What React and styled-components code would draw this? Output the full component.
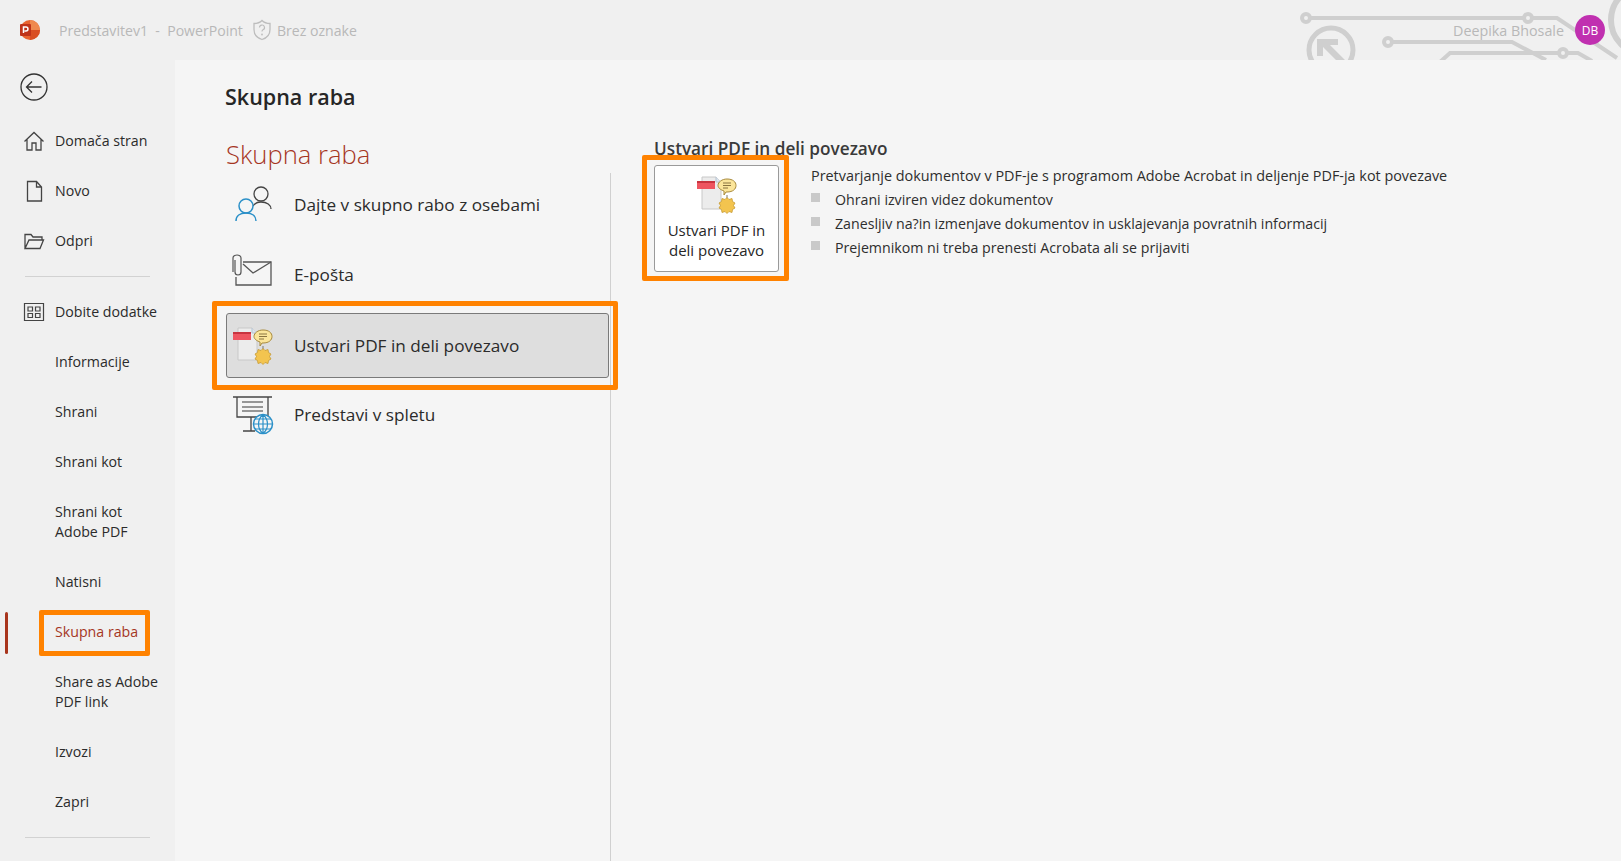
import React from 'react';
import styled, { createGlobalStyle } from 'styled-components';

const GlobalStyle = createGlobalStyle`
  html, body {
    margin: 0;
    padding: 0;
    height: 100%;
    overflow: hidden;
    background: #f0f0f0;
    font-family: "Open Sans", "Noto Sans", "Liberation Sans", sans-serif;
  }
  *, *::before, *::after { box-sizing: border-box; }
`;

const Orange = '#ff8200';

const Page = styled.div`
  width: 100%;
  height: 861px;
  display: flex;
  flex-direction: column;
  overflow: hidden;
  color: #262626;
`;

const TitleBar = styled.header`
  position: relative;
  flex: 0 0 60px;
  display: flex;
  align-items: center;
  padding: 0 16px 0 19px;
  font-size: 14.1px;
  color: #b8b8b8;
  overflow: hidden;
`;

const Logo = styled.svg`
  width: 22px;
  height: 22px;
  margin-right: 18px;
`;

const TitleText = styled.span`
  white-space: pre;
`;

const ShieldIcon = styled.svg`
  width: 20px;
  height: 22px;
  margin: 0 5px 0 9px;
`;

const Account = styled.div`
  position: relative;
  margin-left: auto;
  display: flex;
  align-items: center;
  gap: 11px;
  font-size: 14.3px;
`;

const Avatar = styled.div`
  width: 30px;
  height: 30px;
  border-radius: 50%;
  background: #c030b0;
  color: #fff;
  font-size: 12px;
  display: flex;
  align-items: center;
  justify-content: center;
`;

const Circuit = styled.svg`
  position: absolute;
  top: 0;
  right: 0;
  width: 371px;
  height: 60px;
`;

const Body = styled.div`
  flex: 1;
  display: flex;
  min-height: 0;
`;

const Sidebar = styled.nav`
  flex: 0 0 175px;
  padding-top: 12px;
  font-size: 14.2px;
`;

const BackButton = styled.svg`
  display: block;
  width: 30px;
  height: 30px;
  margin: 0 0 14px 19px;
`;

const NavItem = styled.div`
  position: relative;
  height: ${p => (p.$tall ? 70 : 50)}px;
  display: flex;
  align-items: center;
  padding-left: 55px;
  line-height: 20px;
  white-space: pre-line;
  color: ${p => (p.$active ? '#a5361f' : '#2b2b2b')};

  ${p => p.$active && `
    &::before {
      content: '';
      position: absolute;
      left: 5px;
      top: 5px;
      bottom: 3px;
      width: 3px;
      border-radius: 2px;
      background: #a8351d;
    }
    &::after {
      content: '';
      position: absolute;
      left: 39px;
      top: 3px;
      width: 111px;
      height: 46px;
      border: 5px solid ${Orange};
      border-radius: 2px;
    }
  `}
`;

const NavIcon = styled.svg`
  position: absolute;
  left: 22px;
  top: 50%;
  width: 24px;
  height: 24px;
  margin-top: -12px;
`;

const NavDivider = styled.hr`
  margin: 10px 25px 10px 25px;
  width: 125px;
  border: 0;
  border-top: 1px solid #d2d2d2;
`;

const Main = styled.main`
  flex: 1;
  min-width: 0;
  background: #f5f5f5;
  padding: 20px 0 0 50px;
  display: flex;
  flex-direction: column;
`;

const PageTitle = styled.h1`
  margin: 0;
  font-size: 21.5px;
  line-height: 34px;
  font-weight: 600;
  color: #262626;
`;

const Columns = styled.div`
  flex: 1;
  display: flex;
  min-height: 0;
  margin-top: 21px;
`;

const LeftColumn = styled.section`
  flex: 0 0 386px;
  display: flex;
  flex-direction: column;
`;

const SectionTitle = styled.h2`
  margin: 0;
  padding-left: 1px;
  font-size: 25.6px;
  line-height: 40px;
  font-weight: 300;
  color: #a5361f;
`;

const ShareList = styled.div`
  flex: 1;
  border-right: 1px solid #d0d0d0;
  margin-top: -2px;
`;

const ShareRow = styled.div`
  position: relative;
  height: ${p => (p.$selected ? 65 : 70)}px;
  margin: ${p => (p.$selected ? '4px 1px 1px 1px' : '0')};
  display: flex;
  align-items: center;
  gap: 20px;
  padding-left: 7px;
  font-size: 17.2px;
  color: #2b2b2b;
  &:first-child {
    margin-top: -4px;
  }
  ${p => p.$selected && `
    background: #dedede;
    border: 1px solid #7a7a7a;
    border-radius: 3px;
    padding-left: 5px;
    &::after {
      content: '';
      position: absolute;
      inset: -13px -10px -13px -15px;
      border: 5px solid ${Orange};
      border-radius: 2px;
    }
  `}
`;

const ShareIcon = styled.svg`
  flex: 0 0 42px;
  width: 42px;
  height: 42px;
`;

const RightColumn = styled.section`
  flex: 1;
  padding: 3px 0 0 43px;
`;

const RightTitle = styled.h3`
  margin: 0;
  font-size: 17.2px;
  line-height: 22px;
  font-weight: 600;
  color: #3a3a3a;
`;

const ActionRow = styled.div`
  display: flex;
  margin-top: 5px;
  gap: 32px;
`;

const ActionButton = styled.div`
  position: relative;
  flex: 0 0 125px;
  height: 107px;
  background: #fff;
  border: 1px solid #9a9a9a;
  border-radius: 3px;
  display: flex;
  flex-direction: column;
  align-items: center;
  padding-top: 8px;
  font-size: 15px;
  line-height: 20px;
  text-align: center;
  color: #262626;
  &::after {
    content: '';
    position: absolute;
    inset: -11px -11px -10px -13px;
    border: 5px solid ${Orange};
    border-radius: 2px;
  }
`;

const ActionIcon = styled.svg`
  width: 42px;
  height: 42px;
  margin-bottom: 4px;
`;

const Description = styled.div`
  margin-top: -1px;
  font-size: 14.4px;
  line-height: 24px;
  color: #2e2e2e;
`;

const BulletList = styled.ul`
  list-style: none;
  margin: 0;
  padding: 0;
  font-size: 14.2px;
`;

const Bullet = styled.li`
  position: relative;
  padding-left: 24px;
  &::before {
    content: '';
    position: absolute;
    left: 0;
    top: 5px;
    width: 9px;
    height: 9px;
    background: #c9c9c9;
  }
`;

const PdfLinkGlyph = ({ as: Svg }) => (
  <Svg viewBox="0 0 42 42">
    <path d="M6 3h14l5 5v27H6z" fill="#ececec" stroke="#c8c8c8" />
    <path d="M20 3v5h5" fill="#dbe4ee" stroke="#b6c4d2" />
    <rect x="1" y="7" width="18" height="8" fill="#ee5560" />
    <rect x="1" y="7" width="18" height="2" fill="#c8343f" />
    <path d="M31 5c6 0 9 3 9 6.500s-3 6.500-9 6.500h-1l-2 3v-4c-3-1-6-3-6-5.500C22 8 26 5 31 5z" fill="#fbe59a" stroke="#a88a3c" />
    <path d="M27 9h8M27 11.500h8M27 14h5" stroke="#8a7440" strokeWidth="1" />
    <path d="M31 21v4" stroke="#777" />
    <path transform="translate(0 -1.500)" d="M31 25l2 2 3-1 .5 3 2.500 1.500-1.500 2.500 1.500 2.500-2.500 1.500-.5 3-3-1-2 2-2-2-3 1-.5-3-2.500-1.500 1.500-2.500-1.500-2.500 2.500-1.500.5-3 3 1z" fill="#f3c44f" stroke="#c79a34" strokeWidth=".8" />
  </Svg>
);

const nav = [
  { label: 'Domača stran', icon: 'home' },
  { label: 'Novo', icon: 'new' },
  { label: 'Odpri', icon: 'open' },
  { divider: true },
  { label: 'Dobite dodatke', icon: 'addins' },
  { label: 'Informacije' },
  { label: 'Shrani' },
  { label: 'Shrani kot' },
  { label: 'Shrani kot\nAdobe PDF', tall: true },
  { label: 'Natisni' },
  { label: 'Skupna raba', active: true },
  { label: 'Share as Adobe\nPDF link', tall: true },
  { label: 'Izvozi' },
  { label: 'Zapri' },
  { divider: true },
];

const navIcons = {
  home: <path d="M2.500 12.500L12 3.500l9.500 9M5 10.500V21h5v-7h4v7h5V10.500" fill="none" stroke="#444" strokeWidth="1.300" />,
  new: <path d="M5.500 2.500h9l5 5.500v14h-14zM14.500 2.500V8h5" fill="none" stroke="#444" strokeWidth="1.300" />,
  open: <path d="M3 19.500V5.500h6l2 2.500h9v3M3 19.500h15l3.500-8.500H7z" fill="none" stroke="#444" strokeWidth="1.300" />,
  addins: <path d="M2.500 3.500h19v17h-19zM6 7h4.500v4H6zM13.500 7H18v4h-4.500zM6 13.500h4.500v4H6zM13.500 13.500H18v4h-4.500z" fill="none" stroke="#444" strokeWidth="1.200" />,
};

const PeopleGlyph = () => (
  <ShareIcon viewBox="0 0 42 42">
    <circle cx="29" cy="11" r="7" fill="none" stroke="#444" strokeWidth="1.300" />
    <path d="M21 23c2-3 5-4 8-4 6 0 10 3 10 7" fill="none" stroke="#444" strokeWidth="1.300" />
    <circle cx="14" cy="23" r="7" fill="#f5f5f5" stroke="#2b90c8" strokeWidth="1.500" />
    <path d="M4 38c0-5 4-8 10-8s10 3 10 8" fill="none" stroke="#2b90c8" strokeWidth="1.500" />
  </ShareIcon>
);

const MailGlyph = () => (
  <ShareIcon viewBox="0 0 42 42">
    <path d="M11 9h28v23H4V24" fill="none" stroke="#555" strokeWidth="1.300" />
    <path d="M11 11l10 9 18-11" fill="none" stroke="#555" strokeWidth="1.300" />
    <path d="M3 6v12c0 4 6 4 6 0V4C9 0 1 0 1 4v14" fill="none" stroke="#555" strokeWidth="1.200" transform="translate(0 1)" />
  </ShareIcon>
);

const PresentGlyph = () => (
  <ShareIcon viewBox="0 0 42 42">
    <path d="M1 4h39" stroke="#444" strokeWidth="1.300" />
    <path d="M5 4v20h31V4" fill="none" stroke="#444" strokeWidth="1.300" />
    <path d="M10 9h21M10 14h21M10 18h21" stroke="#777" strokeWidth="1.300" />
    <path d="M19 24v14M11 38h12" stroke="#444" strokeWidth="1.300" />
    <circle cx="31" cy="31" r="9.500" fill="#f5f5f5" stroke="#2b90c8" strokeWidth="1.500" />
    <path d="M21.500 31h19M31 21.500c-6 5-6 14 0 19M31 21.500c6 5 6 14 0 19M31 21.500v19M23 26h16M23 36h16" fill="none" stroke="#2b90c8" strokeWidth="1.200" />
  </ShareIcon>
);

const App = () => (
  <Page>
    <GlobalStyle />
    <TitleBar>
      <Logo viewBox="0 0 22 22">
        <circle cx="11" cy="11" r="10" fill="#e8632f" />
        <path d="M11 1a10 10 0 0 1 10 10H11z" fill="#ef8a4e" />
        <path d="M11 21a10 10 0 0 0 10-10H11z" fill="#d94f24" />
        <rect x="1" y="5" width="11" height="12" rx="1" fill="#bf3319" />
        <path d="M4.500 14V8h2.500a1.900 1.900 0 0 1 0 3.900H5.500" fill="none" stroke="#fff" strokeWidth="1.500" />
      </Logo>
      <TitleText>Predstavitev1  -  PowerPoint</TitleText>
      <ShieldIcon viewBox="0 0 20 22">
        <path d="M10 1.500c2 2 5 3 8 3v6c0 5-3 8.500-8 10-5-1.500-8-5-8-10v-6c3 0 6-1 8-3z" fill="none" stroke="#bdbdbd" strokeWidth="1.300" />
        <path d="M7.500 8.500a2.500 2.500 0 1 1 3.500 2.300c-.7.400-1 .9-1 1.700" fill="none" stroke="#bdbdbd" strokeWidth="1.200" />
        <circle cx="10" cy="15.500" r=".9" fill="#bdbdbd" />
      </ShieldIcon>
      <TitleText>Brez oznake</TitleText>
      <Circuit viewBox="0 0 371 60">
        <g fill="none" stroke="#cfcfcf" strokeWidth="4">
          <circle cx="56" cy="18" r="4" />
          <path d="M60 18h214M282 18h25l60 40" />
          <circle cx="278" cy="18" r="4" />
          <circle cx="138" cy="42" r="4" />
          <path d="M142 42h120l34 18" />
          <path d="M190 62l10-9h110" />
          <circle cx="313" cy="53" r="4" />
          <path d="M318 53h10l14 8" />
          <circle cx="81" cy="50" r="22" strokeWidth="5" />
          <circle cx="395" cy="20" r="34" strokeWidth="6" />
        </g>
        <path d="M69 39h19v6h-8l15 15h-9L73 47v9h-6V39z" fill="#cfcfcf" />
      </Circuit>
      <Account>
        <span>Deepika Bhosale</span>
        <Avatar>DB</Avatar>
      </Account>
    </TitleBar>
    <Body>
      <Sidebar>
        <BackButton viewBox="0 0 30 30">
          <circle cx="15" cy="15" r="13" fill="none" stroke="#333" strokeWidth="1.300" />
          <path d="M7.500 15h15M13 9.500L7.500 15l5.500 5.500" fill="none" stroke="#333" strokeWidth="1.300" />
        </BackButton>
        {nav.map((item, i) =>
          item.divider ? (
            <NavDivider key={i} />
          ) : (
            <NavItem key={i} $tall={item.tall} $active={item.active}>
              {item.icon && <NavIcon viewBox="0 0 24 24">{navIcons[item.icon]}</NavIcon>}
              {item.label}
            </NavItem>
          )
        )}
      </Sidebar>
      <Main>
        <PageTitle>Skupna raba</PageTitle>
        <Columns>
          <LeftColumn>
            <SectionTitle>Skupna raba</SectionTitle>
            <ShareList>
              <ShareRow><PeopleGlyph />Dajte v skupno rabo z osebami</ShareRow>
              <ShareRow><MailGlyph />E-pošta</ShareRow>
              <ShareRow $selected><PdfLinkGlyph as={ShareIcon} />Ustvari PDF in deli povezavo</ShareRow>
              <ShareRow><PresentGlyph />Predstavi v spletu</ShareRow>
            </ShareList>
          </LeftColumn>
          <RightColumn>
            <RightTitle>Ustvari PDF in deli povezavo</RightTitle>
            <ActionRow>
              <ActionButton>
                <PdfLinkGlyph as={ActionIcon} />
                <span>Ustvari PDF in<br />deli povezavo</span>
              </ActionButton>
              <Description>
                Pretvarjanje dokumentov v PDF-je s programom Adobe Acrobat in deljenje PDF-ja kot povezave
                <BulletList>
                  <Bullet>Ohrani izviren videz dokumentov</Bullet>
                  <Bullet>Zanesljiv na?in izmenjave dokumentov in usklajevanja povratnih informacij</Bullet>
                  <Bullet>Prejemnikom ni treba prenesti Acrobata ali se prijaviti</Bullet>
                </BulletList>
              </Description>
            </ActionRow>
          </RightColumn>
        </Columns>
      </Main>
    </Body>
  </Page>
);

export default App;
